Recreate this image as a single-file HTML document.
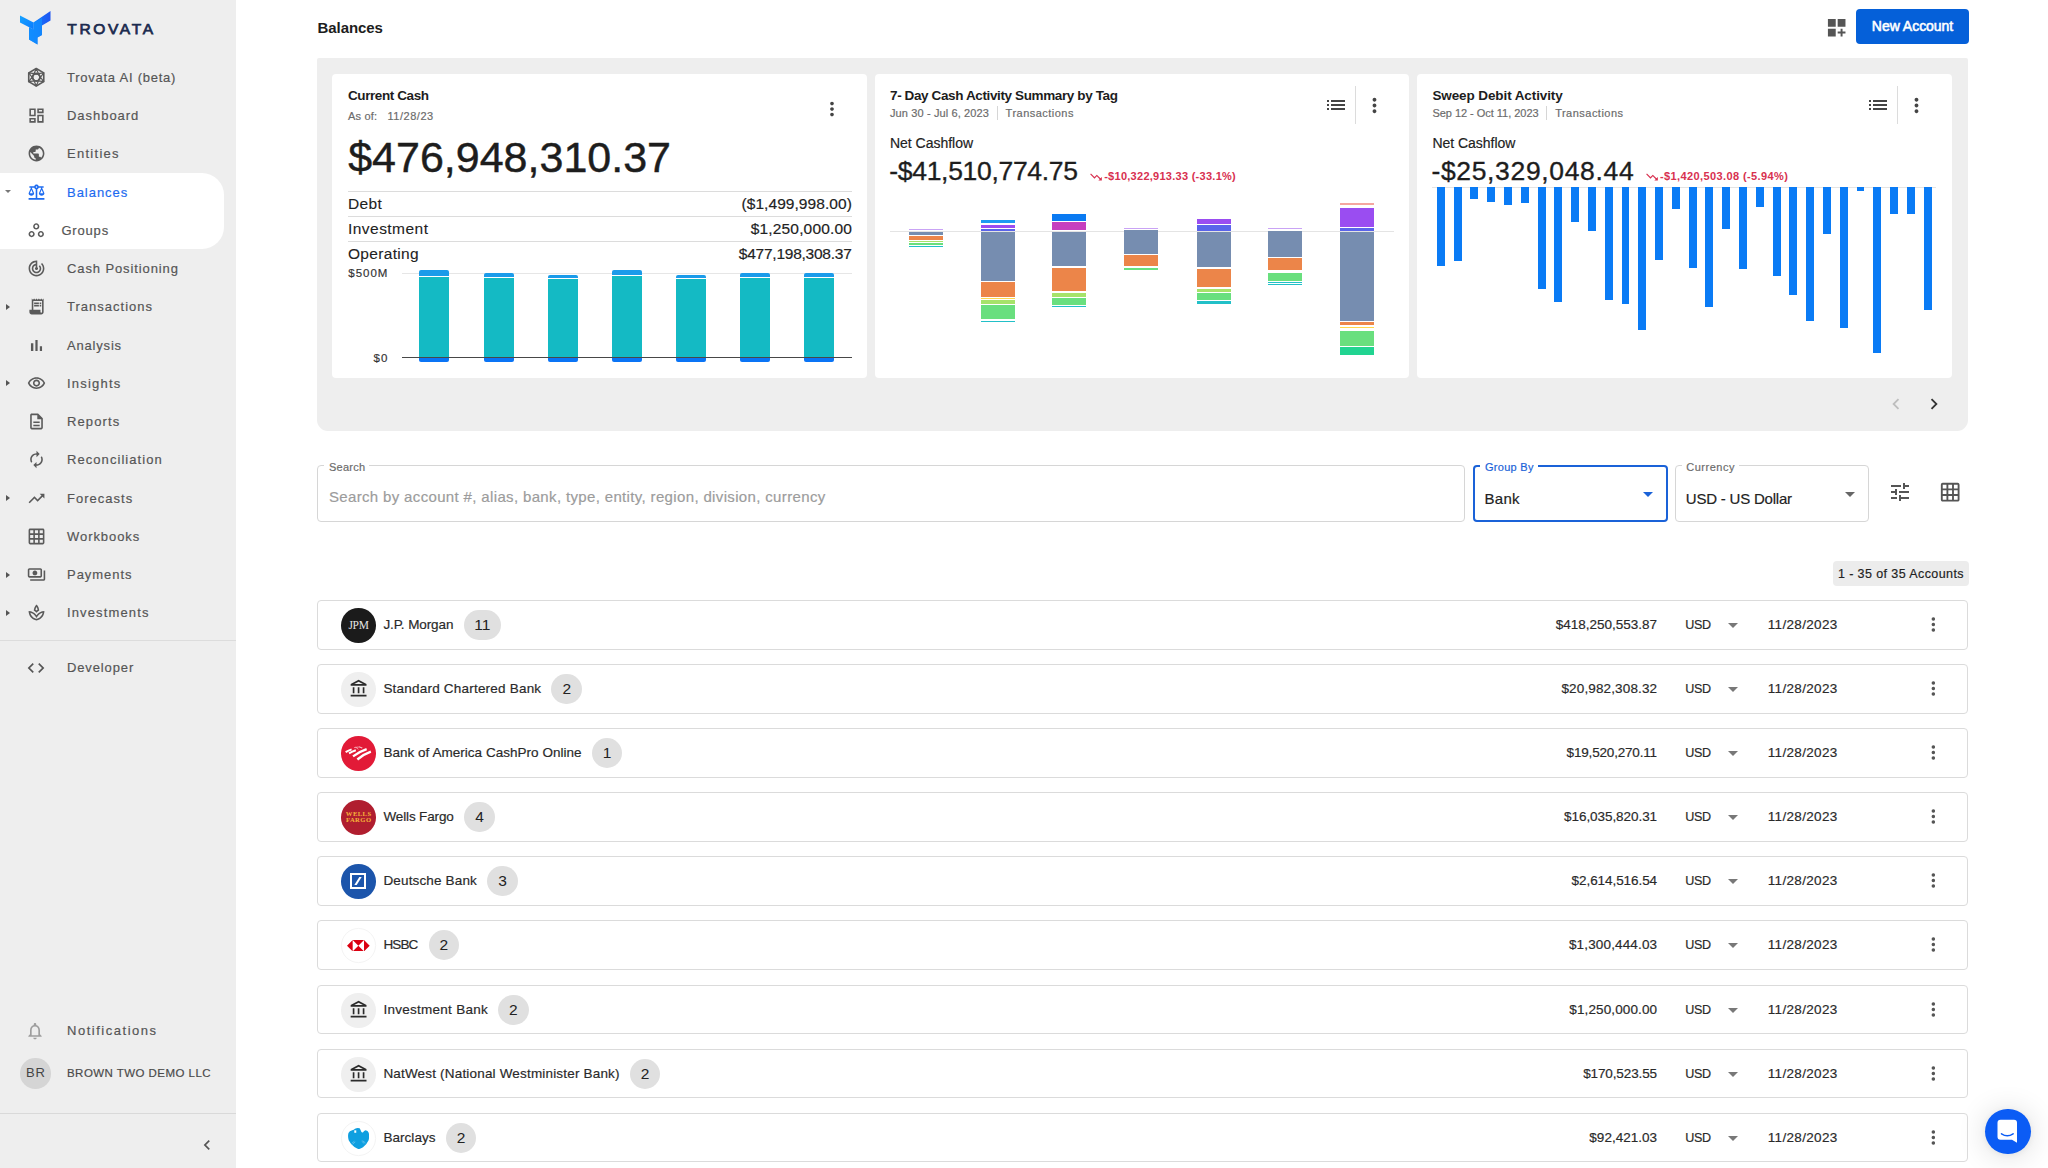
<!DOCTYPE html>
<html lang="en">
<head>
<meta charset="utf-8">
<title>Balances</title>
<style>
*{box-sizing:border-box;margin:0;padding:0}
html,body{width:2048px;height:1168px;overflow:hidden;background:#fff}
body{font-family:"Liberation Sans",sans-serif;color:#212121;position:relative}
.abs{position:absolute}
/* sidebar */
#sb{position:absolute;left:0;top:0;width:236px;height:1168px;background:#eeeeee}
#sb .act{position:absolute;left:0;top:173px;width:224px;height:76px;background:#fff;border-radius:0 22px 22px 0}
.mi{-webkit-text-stroke:.18px currentColor;position:absolute;left:67px;font-size:13px;letter-spacing:.9px;color:#555;line-height:20px;white-space:nowrap}
.mi.on{color:#1d6bf0}
.ic{position:absolute;left:26px;width:20px;height:20px}
.car{position:absolute;left:6px;width:0;height:0;border-top:3px solid transparent;border-bottom:3px solid transparent;border-left:4px solid #555}
.hr{position:absolute;left:0;width:236px;height:1px;background:#dcdcdc}
/* main */
#title{position:absolute;left:317.6px;top:18.1px;font-size:15px;letter-spacing:-.1px;font-weight:bold;line-height:20px;color:#1d1d1d}
#newacc{position:absolute;left:1855.9px;top:9.4px;width:112.8px;height:34.5px;background:#0560d9;border-radius:4px;color:#fff;font-size:14px;letter-spacing:-.03px;-webkit-text-stroke:.55px #fff;line-height:35.6px;text-align:center;padding-left:.5px}
#panel{position:absolute;left:317.2px;top:58.3px;width:1651.2px;height:372.6px;background:#eeeeee;border-radius:2px 2px 11px 11px}
.card{position:absolute;top:74.3px;width:534.5px;height:304px;background:#fff;border-radius:4px}
/* rows */
.row{position:absolute;left:317px;width:1651px;height:50px;border:1px solid #d6d6d6;border-radius:4px;background:#fff}
.row .nm{position:absolute;left:65px;top:15px;font-size:14px;line-height:18px;white-space:nowrap;color:#222}
.row .bd{position:absolute;top:9px;height:30px;min-width:30px;border-radius:15px;background:#e0e0e0;font-size:15px;line-height:30px;text-align:center;color:#222;padding:0 9px}
.row .amt{position:absolute;right:310px;top:16px;font-size:14px;line-height:18px;white-space:nowrap;color:#222}
.row .cur{position:absolute;left:1366px;top:15px;font-size:14px;line-height:18px;color:#222}
.row .dd{position:absolute;left:1411px;top:22px;width:0;height:0;border-left:5px solid transparent;border-right:5px solid transparent;border-top:5px solid #666}
.row .dt{position:absolute;left:1450px;top:16px;font-size:14px;line-height:18px;color:#222}
.row .kb{position:absolute;left:1613px;top:16px;width:4px;height:18px}
.logo{position:absolute;left:23px;top:7px;width:34px;height:34px;border-radius:50%;overflow:hidden}
</style>
</head>
<body>
<div id="sb">
  <div class="act"></div>
  <svg class="abs" style="left:19px;top:10px" width="33" height="36" viewBox="0 0 33 36">
<defs><linearGradient id="lg1" x1="0" y1="0" x2="1" y2="1"><stop offset="0" stop-color="#16a3ff"/><stop offset="1" stop-color="#0a7bff"/></linearGradient>
<linearGradient id="lg2" x1="0" y1="0" x2="1" y2="0"><stop offset="0" stop-color="#0f86ff"/><stop offset="1" stop-color="#1f55f2"/></linearGradient></defs>
<path d="M1 5.500 L14.500 12.500 L14.500 19.500 L1 12.500z" fill="url(#lg1)"/>
<path d="M14.500 12.500 L31.500 1 L31.500 10.500 L23 15.500 L23 25 L18.500 27.500 L18.500 34.500 L10 29.500 L10 17.200 L14.500 19.500z" fill="url(#lg2)"/>
<path d="M14.500 12.500 L23 8 L23 25 L18.500 27.500 L18.500 34.500 L10 29.500 L10 17.200 L14.500 19.500z" fill="#1290ff" opacity=".75"/>
</svg>
<div class="abs" style="left:67.3px;top:18.3px;font-size:15.5px;font-weight:normal;-webkit-text-stroke:.75px #1c2b4f;letter-spacing:2.66px;line-height:22px;color:#1c2b4f;white-space:nowrap">TROVATA</div>
<div class="mi" style="left:67px;top:67.95px;letter-spacing:0.75px">Trovata AI (beta)</div>
<div class="ic" style="left:26.35px;top:67.10px;width:20.5px;height:20.5px"><svg viewBox="0 0 24 24" width="20.5" height="20.5" style="display:block"><g fill="none" stroke="#5a5a5a" stroke-width="1.9" stroke-linejoin="round"><path d="M12 1.8l8.8 5.1v10.2L12 22.200l-8.800-5.100V6.900z"/><circle cx="12" cy="12" r="4.400" stroke-width="2.200"/><path d="M12 1.800l4.300 10.200L12 22.200 7.700 12zM3.200 6.900l11 1.400 6.600 8.800-11-1.400zM20.800 6.900l-6.600 8.800-11 1.400 6.600-8.800z" stroke-width="1.350"/></g></svg></div>
<div class="mi" style="left:67px;top:106.20px;letter-spacing:0.96px">Dashboard</div>
<div class="ic" style="left:26.80px;top:106.10px"><svg viewBox="0 0 24 24" width="19" height="19" style="display:block;"><path fill="#5a5a5a" d="M19 5v2h-4V5h4M9 5v6H5V5h4m10 8v6h-4v-6h4M9 17v2H5v-2h4M21 3h-8v6h8V3zM11 3H3v10h8V3zm10 8h-8v10h8V11zm-10 4H3v6h8v-6z"/></svg></div>
<div class="mi" style="left:67px;top:144.45px;letter-spacing:1.28px">Entities</div>
<div class="ic" style="left:26.80px;top:144.35px"><svg viewBox="0 0 24 24" width="19" height="19" style="display:block;"><path fill="#5a5a5a" d="M12 2C6.48 2 2 6.48 2 12s4.48 10 10 10 10-4.48 10-10S17.52 2 12 2zm-1 17.93c-3.95-.49-7-3.85-7-7.93 0-.62.08-1.21.21-1.79L9 15v1c0 1.1.9 2 2 2v1.93zm6.9-2.54c-.26-.81-1-1.39-1.9-1.39h-1v-3c0-.55-.45-1-1-1H8v-2h2c.55 0 1-.45 1-1V7h2c1.1 0 2-.9 2-2v-.41c2.93 1.19 5 4.06 5 7.41 0 2.08-.8 3.97-2.1 5.39z"/></svg></div>
<div class="mi on" style="left:67px;top:182.70px;letter-spacing:0.97px">Balances</div>
<div class="ic" style="left:26.80px;top:182.60px"><svg viewBox="0 0 24 24" width="19" height="19" style="display:block;"><path fill="#1d6bf0" d="M13 7.83c.85-.3 1.53-.98 1.83-1.83H18l-3 7c0 1.66 1.57 3 3.5 3s3.5-1.34 3.5-3l-3-7h2V4h-6.17c-.41-1.17-1.52-2-2.83-2s-2.42.83-2.83 2H3v2h2l-3 7c0 1.66 1.57 3 3.5 3S9 14.66 9 13L6 6h3.17c.3.85.98 1.53 1.83 1.83V19H2v2h20v-2h-9V7.83zM20.37 13h-3.74l1.87-4.36L20.37 13zm-13 0H3.63L5.5 8.64 7.37 13zM12 6c-.55 0-1-.45-1-1s.45-1 1-1 1 .45 1 1-.45 1-1 1z"/></svg></div>
<div class="abs" style="left:5px;top:190.10px;width:0;height:0;border-left:3px solid transparent;border-right:3px solid transparent;border-top:3.500px solid #777"></div>
<div class="mi" style="left:61.4px;top:220.95px;letter-spacing:0.83px">Groups</div>
<div class="ic" style="left:27.05px;top:221.10px"><svg viewBox="0 0 24 24" width="18.5" height="18.5" style="display:block;"><path fill="#5a5a5a" d="M6 15c1.1 0 2 .9 2 2s-.9 2-2 2-2-.9-2-2 .9-2 2-2m0-2c-2.2 0-4 1.8-4 4s1.8 4 4 4 4-1.8 4-4-1.8-4-4-4zm6-8c1.1 0 2 .9 2 2s-.9 2-2 2-2-.9-2-2 .9-2 2-2m0-2C9.8 3 8 4.8 8 7s1.8 4 4 4 4-1.8 4-4-1.8-4-4-4zm6 12c1.1 0 2 .9 2 2s-.9 2-2 2-2-.9-2-2 .9-2 2-2m0-2c-2.2 0-4 1.8-4 4s1.8 4 4 4 4-1.8 4-4-1.8-4-4-4z"/></svg></div>
<div class="mi" style="left:67px;top:259.20px;letter-spacing:0.89px">Cash Positioning</div>
<div class="ic" style="left:26.80px;top:259.10px"><svg viewBox="0 0 24 24" width="19" height="19" style="display:block;"><path fill="#5a5a5a" d="M19.07 4.93l-1.41 1.41C19.1 7.79 20 9.79 20 12c0 4.42-3.58 8-8 8s-8-3.58-8-8c0-4.08 3.05-7.44 7-7.93v2.02C8.16 6.57 6 9.03 6 12c0 3.31 2.69 6 6 6s6-2.69 6-6c0-1.66-.67-3.16-1.76-4.24l-1.41 1.41C15.55 9.9 16 10.9 16 12c0 2.21-1.79 4-4 4s-4-1.79-4-4c0-1.86 1.28-3.41 3-3.86v2.14c-.6.35-1 .98-1 1.72 0 1.1.9 2 2 2s2-.9 2-2c0-.74-.4-1.38-1-1.72V2h-1C6.48 2 2 6.48 2 12s4.48 10 10 10 10-4.48 10-10c0-2.76-1.12-5.26-2.93-7.07z"/></svg></div>
<div class="mi" style="left:67px;top:297.45px;letter-spacing:1.01px">Transactions</div>
<div class="ic" style="left:26.80px;top:297.35px"><svg viewBox="0 0 24 24" width="19" height="19" style="display:block;"><path fill="#5a5a5a" d="M19.5 3.5 18 2l-1.5 1.5L15 2l-1.5 1.5L12 2l-1.5 1.5L9 2 7.5 3.5 6 2v14H3v3c0 1.66 1.34 3 3 3h12c1.66 0 3-1.34 3-3V2l-1.5 1.5zM19 19c0 .55-.45 1-1 1s-1-.45-1-1v-3H8V5h11v14zM9 7h6v2H9zm7 0h2v2h-2zm-7 3h6v2H9zm7 0h2v2h-2z"/></svg></div>
<div class="car" style="top:303.85px"></div>
<div class="mi" style="left:67px;top:335.70px;letter-spacing:0.81px">Analysis</div>
<div class="ic" style="left:26.80px;top:335.60px"><svg viewBox="0 0 24 24" width="19" height="19" style="display:block;"><path fill="#5a5a5a" d="M5 9.2h3V19H5V9.2zM10.6 5h2.8v14h-2.8V5zm5.6 8H19v6h-2.8v-6z"/></svg></div>
<div class="mi" style="left:67px;top:373.95px;letter-spacing:1.2px">Insights</div>
<div class="ic" style="left:26.80px;top:373.85px"><svg viewBox="0 0 24 24" width="19" height="19" style="display:block;"><path fill="#5a5a5a" d="M12 6c3.79 0 7.17 2.13 8.82 5.5C19.17 14.87 15.79 17 12 17s-7.17-2.13-8.82-5.5C4.83 8.13 8.21 6 12 6m0-2C7 4 2.73 7.11 1 11.5 2.73 15.89 7 19 12 19s9.27-3.11 11-7.5C21.27 7.11 17 4 12 4zm0 5c1.38 0 2.5 1.12 2.5 2.5S13.38 14 12 14s-2.5-1.12-2.5-2.5S10.620 9 12 9m0-2c-2.48 0-4.5 2.02-4.5 4.5S9.52 16 12 16s4.5-2.02 4.5-4.5S14.48 7 12 7z"/></svg></div>
<div class="car" style="top:380.35px"></div>
<div class="mi" style="left:67px;top:412.20px;letter-spacing:1.11px">Reports</div>
<div class="ic" style="left:26.80px;top:412.10px"><svg viewBox="0 0 24 24" width="19" height="19" style="display:block;"><path fill="#5a5a5a" d="M8 16h8v2H8zm0-4h8v2H8zm6-10H6c-1.1 0-2 .9-2 2v16c0 1.1.89 2 1.99 2H18c1.1 0 2-.9 2-2V8l-6-6zm4 18H6V4h7v5h5v11z"/></svg></div>
<div class="mi" style="left:67px;top:450.45px;letter-spacing:1.06px">Reconciliation</div>
<div class="ic" style="left:26.80px;top:450.35px"><svg viewBox="0 0 24 24" width="19" height="19" style="display:block;"><path fill="#5a5a5a" d="M12 6v3l4-4-4-4v3c-4.42 0-8 3.58-8 8 0 1.57.46 3.03 1.24 4.26L6.7 14.8c-.45-.83-.7-1.79-.7-2.8 0-3.31 2.69-6 6-6zm6.76 1.74L17.3 9.2c.44.84.7 1.79.7 2.8 0 3.31-2.69 6-6 6v-3l-4 4 4 4v-3c4.42 0 8-3.58 8-8 0-1.57-.46-3.03-1.24-4.26z"/></svg></div>
<div class="mi" style="left:67px;top:488.70px;letter-spacing:1.02px">Forecasts</div>
<div class="ic" style="left:26.80px;top:488.60px"><svg viewBox="0 0 24 24" width="19" height="19" style="display:block;"><path fill="#5a5a5a" d="M16 6l2.29 2.29-4.88 4.88-4-4L2 16.59 3.41 18l6-6 4 4 6.3-6.29L22 12V6z"/></svg></div>
<div class="car" style="top:495.10px"></div>
<div class="mi" style="left:67px;top:526.95px;letter-spacing:0.93px">Workbooks</div>
<div class="ic" style="left:26.80px;top:526.85px"><svg viewBox="0 0 24 24" width="19" height="19" style="display:block;"><path fill="#5a5a5a" d="M20 2H4c-1.1 0-2 .9-2 2v16c0 1.1.9 2 2 2h16c1.1 0 2-.9 2-2V4c0-1.1-.9-2-2-2zM8 20H4v-4h4v4zm0-6H4v-4h4v4zm0-6H4V4h4v4zm6 12h-4v-4h4v4zm0-6h-4v-4h4v4zm0-6h-4V4h4v4zm6 12h-4v-4h4v4zm0-6h-4v-4h4v4zm0-6h-4V4h4v4z"/></svg></div>
<div class="mi" style="left:67px;top:565.20px;letter-spacing:0.97px">Payments</div>
<div class="ic" style="left:26.80px;top:565.10px"><svg viewBox="0 0 24 24" width="19" height="19" style="display:block;"><path fill="#5a5a5a" d="M19 14V6c0-1.1-.9-2-2-2H3c-1.1 0-2 .9-2 2v8c0 1.1.9 2 2 2h14c1.1 0 2-.9 2-2zm-2 0H3V6h14v8zm-7-7c-1.66 0-3 1.34-3 3s1.34 3 3 3 3-1.34 3-3-1.34-3-3-3zm13 0v11c0 1.1-.9 2-2 2H4v-2h17V7h2z"/></svg></div>
<div class="car" style="top:571.60px"></div>
<div class="mi" style="left:67px;top:603.45px;letter-spacing:1.13px">Investments</div>
<div class="ic" style="left:26.80px;top:603.35px"><svg viewBox="0 0 24 24" width="19" height="19" style="display:block;"><path fill="#5a5a5a" d="M15.49 9.63c-.18-2.79-1.31-5.51-3.43-7.63-2.14 2.14-3.32 4.86-3.55 7.63 1.28.68 2.46 1.56 3.49 2.63 1.03-1.06 2.21-1.94 3.49-2.63zm-3.44-4.44c.63 1.03 1.07 2.18 1.3 3.38-.47.3-.91.63-1.34.98-.42-.34-.87-.67-1.33-.97.25-1.2.71-2.35 1.37-3.39zM12 15.45C9.850 12.170 6.180 10 2 10c0 5.320 3.360 9.820 8.030 11.490.630.230 1.290.400 1.970.510.680-.120 1.330-.290 1.970-.510C18.640 19.820 22 15.320 22 10c-4.180 0-7.850 2.170-10 5.450zm1.320 4.150c-.440.150-.880.270-1.330.370-.440-.090-.870-.210-1.280-.360-3.290-1.180-5.700-3.990-6.450-7.350 1.100.260 2.150.710 3.120 1.330 1.100.75 2.030 1.700 2.950 2.980L12 19.100l1.670-2.550c.690-1.050 1.550-1.950 2.530-2.660 1.050-.720 2.260-1.330 3.540-1.640-.750 3.370-3.150 6.180-6.420 7.350z"/></svg></div>
<div class="car" style="top:609.85px"></div>
<div class="hr" style="top:640px"></div>
<div class="mi" style="top:657.9px;letter-spacing:.87px">Developer</div>
<div class="ic" style="left:26.3px;top:657.5px"><svg viewBox="0 0 24 24" width="20" height="20" style="display:block;"><path fill="#555" d="M9.4 16.6L4.8 12l4.6-4.6L8 6l-6 6 6 6 1.4-1.4zm5.2 0l4.6-4.6-4.6-4.6L16 6l6 6-6 6-1.4-1.4z"/></svg></div>
<div class="mi" style="top:1020.9px;letter-spacing:1.52px">Notifications</div>
<div class="ic" style="left:25.4px;top:1021.3px"><svg viewBox="0 0 24 24" width="20" height="20" style="display:block;"><path fill="#9e9e9e" d="M12 22c1.1 0 2-.9 2-2h-4c0 1.1.9 2 2 2zm6-6v-5c0-3.07-1.63-5.64-4.5-6.32V4c0-.83-.67-1.5-1.5-1.5s-1.5.67-1.5 1.5v.68C7.64 5.36 6 7.92 6 11v5l-2 2v1h16v-1l-2-2zm-2 1H8v-6c0-2.48 1.51-4.5 4-4.5s4 2.02 4 4.5v6z"/></svg></div>
<div class="abs" style="left:20px;top:1058px;width:30.500px;height:30.500px;border-radius:50%;background:#d5d5d5;font-size:13px;letter-spacing:.8px;line-height:30.500px;text-align:center;color:#444;padding-left:1px">BR</div>
<div class="mi" style="top:1063px;font-size:11.5px;letter-spacing:.45px;color:#4a4a4a">BROWN TWO DEMO LLC</div>
<div class="hr" style="top:1112.500px;background:#d9d9d9"></div>
<div class="abs" style="left:197px;top:1135px"><svg viewBox="0 0 24 24" width="20" height="20" style="display:block;"><path fill="#555" d="M15.41 7.41L14 6l-6 6 6 6 1.41-1.41L10.83 12z"/></svg></div>
</div>
<div id="title">Balances</div>
<div id="newacc">New Account</div>
<div id="panel"></div>
<div class="card" style="left:332.4px" id="c1"></div>
<div class="card" style="left:874.6px" id="c2"></div>
<div class="card" style="left:1417.3px" id="c3"></div>
<div class="abs" style="left:1824.7px;top:16.1px"><svg viewBox="0 0 24 24" width="23.4" height="23.4" style="display:block;"><path fill="#555" d="M3 3h8v8H3zm10 0h8v8h-8zM3 13h8v8H3zm15 0h-2v3h-3v2h3v3h2v-3h3v-2h-3z"/></svg></div>
<div class="abs" style="left:348px;top:86.10px;font-size:13.5px;line-height:19px;letter-spacing:-0.41px;font-weight:bold;color:#1d1d1d;white-space:nowrap;">Current Cash</div>
<div class="abs" style="left:348px;top:108.80px;font-size:11px;line-height:15px;letter-spacing:0.21px;font-weight:normal;color:#6b6b6b;white-space:nowrap;-webkit-text-stroke:0.18px #6b6b6b;">As of:</div>
<div class="abs" style="left:387.4px;top:108.80px;font-size:11px;line-height:15px;letter-spacing:0.55px;font-weight:normal;color:#6b6b6b;white-space:nowrap;-webkit-text-stroke:0.18px #6b6b6b;">11/28/23</div>
<div class="abs" style="left:821.2px;top:97.9px"><svg viewBox="0 0 24 24" width="22" height="22" style="display:block;"><path fill="#444" d="M12 8c1.1 0 2-.9 2-2s-.9-2-2-2-2 .9-2 2 .9 2 2 2zm0 2c-1.1 0-2 .9-2 2s.9 2 2 2 2-.9 2-2-.9-2-2-2zm0 6c-1.1 0-2 .9-2 2s.9 2 2 2 2-.9 2-2-.9-2-2-2z"/></svg></div>
<div class="abs" style="left:348.2px;top:132.20px;font-size:43px;line-height:50px;letter-spacing:0px;font-weight:normal;color:#1d1d1d;white-space:nowrap;-webkit-text-stroke:.45px #1d1d1d;">$476,948,310.37</div>
<div class="abs" style="left:347.5px;top:190.8px;width:504.3px;height:1px;background:#dcdcdc"></div>
<div class="abs" style="left:347.5px;top:216.1px;width:504.3px;height:1px;background:#dcdcdc"></div>
<div class="abs" style="left:347.5px;top:240.9px;width:504.3px;height:1px;background:#dcdcdc"></div>
<div class="abs" style="left:348px;top:193.00px;font-size:15.5px;line-height:22px;letter-spacing:0.32px;font-weight:normal;color:#222;white-space:nowrap;-webkit-text-stroke:.1px #222;">Debt</div>
<div class="abs" style="-webkit-text-stroke:0.18px #222;right:1196.14px;top:193.00px;font-size:15.5px;line-height:22px;letter-spacing:0.06px;font-weight:normal;color:#222;white-space:nowrap">($1,499,998.00)</div>
<div class="abs" style="left:348px;top:217.80px;font-size:15.5px;line-height:22px;letter-spacing:0.46px;font-weight:normal;color:#222;white-space:nowrap;-webkit-text-stroke:.1px #222;">Investment</div>
<div class="abs" style="-webkit-text-stroke:0.18px #222;right:1196.04px;top:217.80px;font-size:15.5px;line-height:22px;letter-spacing:0.16px;font-weight:normal;color:#222;white-space:nowrap">$1,250,000.00</div>
<div class="abs" style="left:348px;top:242.70px;font-size:15.5px;line-height:22px;letter-spacing:0.31px;font-weight:normal;color:#222;white-space:nowrap;-webkit-text-stroke:.1px #222;">Operating</div>
<div class="abs" style="-webkit-text-stroke:0.18px #222;right:1196.44px;top:242.70px;font-size:15.5px;line-height:22px;letter-spacing:-0.24px;font-weight:normal;color:#222;white-space:nowrap">$477,198,308.37</div>
<div class="abs" style="-webkit-text-stroke:0.18px #333;right:1659.60px;top:264.70px;font-size:11.5px;line-height:16px;letter-spacing:1.0px;font-weight:normal;color:#333;white-space:nowrap">$500M</div>
<div class="abs" style="-webkit-text-stroke:0.18px #333;right:1659.40px;top:349.80px;font-size:11.5px;line-height:16px;letter-spacing:1.2px;font-weight:normal;color:#333;white-space:nowrap">$0</div>
<div class="abs" style="left:402.40px;top:273.30px;width:449.40px;height:1.00px;background:#e6e6e6"></div>
<div class="abs" style="left:419px;top:270.40px;width:30.3px;height:5.20px;background:#1b9bea;border-radius:2px 2px 0 0"></div>
<div class="abs" style="left:419.00px;top:276.50px;width:30.30px;height:80.90px;background:#14bac4"></div>
<div class="abs" style="left:419px;top:357.4px;width:30.3px;height:4.6px;background:#0a74f5;border-radius:0 0 2px 2px"></div>
<div class="abs" style="left:484px;top:273.40px;width:30.3px;height:3.70px;background:#1b9bea;border-radius:2px 2px 0 0"></div>
<div class="abs" style="left:484.00px;top:278.00px;width:30.30px;height:79.40px;background:#14bac4"></div>
<div class="abs" style="left:484px;top:357.4px;width:30.3px;height:4.6px;background:#0a74f5;border-radius:0 0 2px 2px"></div>
<div class="abs" style="left:548px;top:274.60px;width:30.3px;height:3.20px;background:#1b9bea;border-radius:2px 2px 0 0"></div>
<div class="abs" style="left:548.00px;top:278.70px;width:30.30px;height:78.70px;background:#14bac4"></div>
<div class="abs" style="left:548px;top:357.4px;width:30.3px;height:4.6px;background:#0a74f5;border-radius:0 0 2px 2px"></div>
<div class="abs" style="left:612px;top:270.40px;width:30.3px;height:4.70px;background:#1b9bea;border-radius:2px 2px 0 0"></div>
<div class="abs" style="left:612.00px;top:276.00px;width:30.30px;height:81.40px;background:#14bac4"></div>
<div class="abs" style="left:612px;top:357.4px;width:30.3px;height:4.6px;background:#0a74f5;border-radius:0 0 2px 2px"></div>
<div class="abs" style="left:676px;top:274.60px;width:30.3px;height:3.50px;background:#1b9bea;border-radius:2px 2px 0 0"></div>
<div class="abs" style="left:676.00px;top:279.00px;width:30.30px;height:78.40px;background:#14bac4"></div>
<div class="abs" style="left:676px;top:357.4px;width:30.3px;height:4.6px;background:#0a74f5;border-radius:0 0 2px 2px"></div>
<div class="abs" style="left:740px;top:273.40px;width:30.3px;height:3.70px;background:#1b9bea;border-radius:2px 2px 0 0"></div>
<div class="abs" style="left:740.00px;top:278.00px;width:30.30px;height:79.40px;background:#14bac4"></div>
<div class="abs" style="left:740px;top:357.4px;width:30.3px;height:4.6px;background:#0a74f5;border-radius:0 0 2px 2px"></div>
<div class="abs" style="left:804px;top:273.40px;width:30.3px;height:3.70px;background:#1b9bea;border-radius:2px 2px 0 0"></div>
<div class="abs" style="left:804.00px;top:278.00px;width:30.30px;height:79.40px;background:#14bac4"></div>
<div class="abs" style="left:804px;top:357.4px;width:30.3px;height:4.6px;background:#0a74f5;border-radius:0 0 2px 2px"></div>
<div class="abs" style="left:402.40px;top:356.70px;width:449.40px;height:1.40px;background:#484848"></div>
<div class="abs" style="left:890px;top:86.40px;font-size:13.5px;line-height:19px;letter-spacing:-0.38px;font-weight:bold;color:#1d1d1d;white-space:nowrap;">7- Day Cash Activity Summary by Tag</div>
<div class="abs" style="left:890px;top:105.80px;font-size:11px;line-height:15px;letter-spacing:0.12px;font-weight:normal;color:#6b6b6b;white-space:nowrap;-webkit-text-stroke:0.18px #6b6b6b;">Jun 30 - Jul 6, 2023</div>
<div class="abs" style="left:996.60px;top:105.60px;width:1.00px;height:14.40px;background:#d6d6d6"></div>
<div class="abs" style="left:1005.6px;top:105.80px;font-size:11px;line-height:15px;letter-spacing:0.48px;font-weight:normal;color:#6b6b6b;white-space:nowrap;-webkit-text-stroke:0.18px #6b6b6b;">Transactions</div>
<div class="abs" style="left:1323.7px;top:93px"><svg viewBox="0 0 24 24" width="24" height="24" style="display:block;"><path fill="#444" d="M3 13h2v-2H3v2zm0 4h2v-2H3v2zm0-8h2V7H3v2zm4 4h14v-2H7v2zm0 4h14v-2H7v2zM7 7v2h14V7H7z"/></svg></div>
<div class="abs" style="left:1355.00px;top:86.00px;width:1.00px;height:38.00px;background:#dcdcdc"></div>
<div class="abs" style="left:1363.2px;top:93.7px"><svg viewBox="0 0 24 24" width="23" height="23" style="display:block;"><path fill="#444" d="M12 8c1.1 0 2-.9 2-2s-.9-2-2-2-2 .9-2 2 .9 2 2 2zm0 2c-1.1 0-2 .9-2 2s.9 2 2 2 2-.9 2-2-.9-2-2-2zm0 6c-1.1 0-2 .9-2 2s.9 2 2 2 2-.9 2-2-.9-2-2-2z"/></svg></div>
<div class="abs" style="left:890px;top:133.20px;font-size:14px;line-height:20px;letter-spacing:-0.02px;font-weight:normal;color:#222;white-space:nowrap;-webkit-text-stroke:0.18px #222;">Net Cashflow</div>
<div class="abs" style="left:889.3px;top:154.60px;font-size:26.5px;line-height:32px;letter-spacing:-0.31px;font-weight:normal;color:#1d1d1d;white-space:nowrap;-webkit-text-stroke:.35px #1d1d1d;">-$41,510,774.75</div>
<svg class="abs" style="left:1089px;top:169.6px" width="14" height="14" viewBox="0 0 24 24"><path fill="#d8304f" d="M16 18l2.290-2.290-4.880-4.880-4 4L2 7.410 3.410 6l6 6 4-4 6.300 6.290L22 12v6z"/></svg><div class="abs" style="left:1104.2px;top:169.00px;font-size:11px;line-height:15px;letter-spacing:0.27px;font-weight:bold;color:#d8304f;white-space:nowrap;">-$10,322,913.33 (-33.1%)</div>
<div class="abs" style="left:890.00px;top:231.30px;width:503.60px;height:1.00px;background:#e4e4e4"></div>
<div class="abs" style="left:908.90px;top:228.85px;width:34.40px;height:1.46px;background:#c9a3f5"></div>
<div class="abs" style="left:908.90px;top:232.34px;width:34.40px;height:2.33px;background:#768db0"></div>
<div class="abs" style="left:908.90px;top:235.84px;width:34.40px;height:3.78px;background:#ec8549"></div>
<div class="abs" style="left:908.90px;top:240.79px;width:34.40px;height:1.46px;background:#a6e36a"></div>
<div class="abs" style="left:908.90px;top:242.82px;width:34.40px;height:2.04px;background:#69df7e"></div>
<div class="abs" style="left:908.90px;top:245.74px;width:34.40px;height:0.87px;background:#22c0c8"></div>
<div class="abs" style="left:980.50px;top:220.12px;width:34.40px;height:2.62px;background:#1e9af2"></div>
<div class="abs" style="left:980.50px;top:224.77px;width:34.40px;height:3.49px;background:#9a4df1"></div>
<div class="abs" style="left:980.50px;top:228.85px;width:34.40px;height:1.75px;background:#5a64ea"></div>
<div class="abs" style="left:980.50px;top:231.76px;width:34.40px;height:49.49px;background:#768db0"></div>
<div class="abs" style="left:980.50px;top:282.13px;width:34.40px;height:15.14px;background:#ec8549"></div>
<div class="abs" style="left:980.50px;top:297.85px;width:34.40px;height:1.46px;background:#ffd84d"></div>
<div class="abs" style="left:980.50px;top:300.17px;width:34.40px;height:3.78px;background:#a6e36a"></div>
<div class="abs" style="left:980.50px;top:305.12px;width:34.40px;height:14.26px;background:#69df7e"></div>
<div class="abs" style="left:980.50px;top:320.84px;width:34.40px;height:0.87px;background:#22c0c8"></div>
<div class="abs" style="left:1052.10px;top:214.00px;width:34.40px;height:6.70px;background:#0a7af2"></div>
<div class="abs" style="left:1052.10px;top:222.45px;width:34.40px;height:7.57px;background:#c63fbf"></div>
<div class="abs" style="left:1052.10px;top:232.34px;width:34.40px;height:33.77px;background:#768db0"></div>
<div class="abs" style="left:1052.10px;top:267.57px;width:34.40px;height:23.87px;background:#ec8549"></div>
<div class="abs" style="left:1052.10px;top:292.61px;width:34.40px;height:4.08px;background:#a6e36a"></div>
<div class="abs" style="left:1052.10px;top:298.14px;width:34.40px;height:6.40px;background:#69df7e"></div>
<div class="abs" style="left:1052.10px;top:306.00px;width:34.40px;height:0.87px;background:#22c0c8"></div>
<div class="abs" style="left:1124.00px;top:227.98px;width:34.40px;height:1.46px;background:#c9a3f5"></div>
<div class="abs" style="left:1124.00px;top:230.31px;width:34.40px;height:23.58px;background:#768db0"></div>
<div class="abs" style="left:1124.00px;top:255.34px;width:34.40px;height:10.19px;background:#ec8549"></div>
<div class="abs" style="left:1124.00px;top:267.57px;width:34.40px;height:2.62px;background:#69df7e"></div>
<div class="abs" style="left:1196.50px;top:218.95px;width:34.40px;height:4.66px;background:#9a4df1"></div>
<div class="abs" style="left:1196.50px;top:224.77px;width:34.40px;height:5.82px;background:#5a64ea"></div>
<div class="abs" style="left:1196.50px;top:232.34px;width:34.40px;height:34.93px;background:#768db0"></div>
<div class="abs" style="left:1196.50px;top:268.73px;width:34.40px;height:18.63px;background:#ec8549"></div>
<div class="abs" style="left:1196.50px;top:288.82px;width:34.40px;height:2.91px;background:#a6e36a"></div>
<div class="abs" style="left:1196.50px;top:292.90px;width:34.40px;height:6.99px;background:#69df7e"></div>
<div class="abs" style="left:1196.50px;top:301.05px;width:34.40px;height:2.62px;background:#22c0c8"></div>
<div class="abs" style="left:1268.10px;top:227.98px;width:34.40px;height:1.46px;background:#c9a3f5"></div>
<div class="abs" style="left:1268.10px;top:230.60px;width:34.40px;height:26.20px;background:#768db0"></div>
<div class="abs" style="left:1268.10px;top:257.96px;width:34.40px;height:12.23px;background:#ec8549"></div>
<div class="abs" style="left:1268.10px;top:273.39px;width:34.40px;height:7.28px;background:#69df7e"></div>
<div class="abs" style="left:1268.10px;top:282.13px;width:34.40px;height:0.87px;background:#22c0c8"></div>
<div class="abs" style="left:1268.10px;top:283.87px;width:34.40px;height:0.87px;background:#22c0c8"></div>
<div class="abs" style="left:1340.00px;top:203.23px;width:34.40px;height:1.46px;background:#f5a6a0"></div>
<div class="abs" style="left:1340.00px;top:207.60px;width:34.40px;height:19.51px;background:#9a4df1"></div>
<div class="abs" style="left:1340.00px;top:228.27px;width:34.40px;height:2.33px;background:#5a64ea"></div>
<div class="abs" style="left:1340.00px;top:232.34px;width:34.40px;height:88.50px;background:#768db0"></div>
<div class="abs" style="left:1340.00px;top:322.30px;width:34.40px;height:3.20px;background:#ec8549"></div>
<div class="abs" style="left:1340.00px;top:326.67px;width:34.40px;height:1.75px;background:#ffd84d"></div>
<div class="abs" style="left:1340.00px;top:331.03px;width:34.40px;height:14.56px;background:#69df7e"></div>
<div class="abs" style="left:1340.00px;top:347.05px;width:34.40px;height:7.57px;background:#21d491"></div>
<div class="abs" style="left:1432.4px;top:86.40px;font-size:13.5px;line-height:19px;letter-spacing:-0.1px;font-weight:bold;color:#1d1d1d;white-space:nowrap;">Sweep Debit Activity</div>
<div class="abs" style="left:1432.4px;top:105.80px;font-size:11px;line-height:15px;letter-spacing:-0.03px;font-weight:normal;color:#6b6b6b;white-space:nowrap;-webkit-text-stroke:0.18px #6b6b6b;">Sep 12 - Oct 11, 2023</div>
<div class="abs" style="left:1545.70px;top:105.60px;width:1.00px;height:14.40px;background:#d6d6d6"></div>
<div class="abs" style="left:1555.2px;top:105.80px;font-size:11px;line-height:15px;letter-spacing:0.48px;font-weight:normal;color:#6b6b6b;white-space:nowrap;-webkit-text-stroke:0.18px #6b6b6b;">Transactions</div>
<div class="abs" style="left:1865.8px;top:93px"><svg viewBox="0 0 24 24" width="24" height="24" style="display:block;"><path fill="#444" d="M3 13h2v-2H3v2zm0 4h2v-2H3v2zm0-8h2V7H3v2zm4 4h14v-2H7v2zm0 4h14v-2H7v2zM7 7v2h14V7H7z"/></svg></div>
<div class="abs" style="left:1897.00px;top:86.00px;width:1.00px;height:38.00px;background:#dcdcdc"></div>
<div class="abs" style="left:1905.3px;top:93.7px"><svg viewBox="0 0 24 24" width="23" height="23" style="display:block;"><path fill="#444" d="M12 8c1.1 0 2-.9 2-2s-.9-2-2-2-2 .9-2 2 .9 2 2 2zm0 2c-1.1 0-2 .9-2 2s.9 2 2 2 2-.9 2-2-.9-2-2-2zm0 6c-1.1 0-2 .9-2 2s.9 2 2 2 2-.9 2-2-.9-2-2-2z"/></svg></div>
<div class="abs" style="left:1432.4px;top:133.20px;font-size:14px;line-height:20px;letter-spacing:-0.02px;font-weight:normal;color:#222;white-space:nowrap;-webkit-text-stroke:0.18px #222;">Net Cashflow</div>
<div class="abs" style="left:1431.4px;top:154.50px;font-size:26.5px;line-height:32px;letter-spacing:0.66px;font-weight:normal;color:#1d1d1d;white-space:nowrap;-webkit-text-stroke:.35px #1d1d1d;">-$25,329,048.44</div>
<svg class="abs" style="left:1644.7px;top:169.6px" width="14" height="14" viewBox="0 0 24 24"><path fill="#d8304f" d="M16 18l2.290-2.290-4.880-4.880-4 4L2 7.410 3.410 6l6 6 4-4 6.300 6.290L22 12v6z"/></svg><div class="abs" style="left:1659.9px;top:169.00px;font-size:11px;line-height:15px;letter-spacing:0.4px;font-weight:bold;color:#d8304f;white-space:nowrap;">-$1,420,503.08 (-5.94%)</div>
<div class="abs" style="left:1432.40px;top:186.80px;width:503.40px;height:1.00px;background:#e4e4e4"></div>
<div class="abs" style="left:1436.90px;top:187.30px;width:7.90px;height:78.30px;background:#0a7bf5"></div>
<div class="abs" style="left:1453.69px;top:187.30px;width:7.90px;height:73.40px;background:#0a7bf5"></div>
<div class="abs" style="left:1470.47px;top:187.30px;width:7.90px;height:11.30px;background:#0a7bf5"></div>
<div class="abs" style="left:1487.26px;top:187.30px;width:7.90px;height:14.30px;background:#0a7bf5"></div>
<div class="abs" style="left:1504.04px;top:187.30px;width:7.90px;height:18.10px;background:#0a7bf5"></div>
<div class="abs" style="left:1520.83px;top:187.30px;width:7.90px;height:16.20px;background:#0a7bf5"></div>
<div class="abs" style="left:1537.62px;top:187.30px;width:7.90px;height:101.30px;background:#0a7bf5"></div>
<div class="abs" style="left:1554.40px;top:187.30px;width:7.90px;height:114.50px;background:#0a7bf5"></div>
<div class="abs" style="left:1571.19px;top:187.30px;width:7.90px;height:34.30px;background:#0a7bf5"></div>
<div class="abs" style="left:1587.97px;top:187.30px;width:7.90px;height:43.70px;background:#0a7bf5"></div>
<div class="abs" style="left:1604.76px;top:187.30px;width:7.90px;height:112.60px;background:#0a7bf5"></div>
<div class="abs" style="left:1621.55px;top:187.30px;width:7.90px;height:116.40px;background:#0a7bf5"></div>
<div class="abs" style="left:1638.33px;top:187.30px;width:7.90px;height:142.40px;background:#0a7bf5"></div>
<div class="abs" style="left:1655.12px;top:187.30px;width:7.90px;height:72.30px;background:#0a7bf5"></div>
<div class="abs" style="left:1671.90px;top:187.30px;width:7.90px;height:21.40px;background:#0a7bf5"></div>
<div class="abs" style="left:1688.69px;top:187.30px;width:7.90px;height:81.00px;background:#0a7bf5"></div>
<div class="abs" style="left:1705.48px;top:187.30px;width:7.90px;height:119.40px;background:#0a7bf5"></div>
<div class="abs" style="left:1722.26px;top:187.30px;width:7.90px;height:41.40px;background:#0a7bf5"></div>
<div class="abs" style="left:1739.05px;top:187.30px;width:7.90px;height:82.10px;background:#0a7bf5"></div>
<div class="abs" style="left:1755.83px;top:187.30px;width:7.90px;height:19.60px;background:#0a7bf5"></div>
<div class="abs" style="left:1772.62px;top:187.30px;width:7.90px;height:88.90px;background:#0a7bf5"></div>
<div class="abs" style="left:1789.41px;top:187.30px;width:7.90px;height:107.70px;background:#0a7bf5"></div>
<div class="abs" style="left:1806.19px;top:187.30px;width:7.90px;height:133.70px;background:#0a7bf5"></div>
<div class="abs" style="left:1822.98px;top:187.30px;width:7.90px;height:46.70px;background:#0a7bf5"></div>
<div class="abs" style="left:1839.76px;top:187.30px;width:7.90px;height:140.50px;background:#0a7bf5"></div>
<div class="abs" style="left:1856.55px;top:187.30px;width:7.90px;height:3.70px;background:#0a7bf5"></div>
<div class="abs" style="left:1873.34px;top:187.30px;width:7.90px;height:166.10px;background:#0a7bf5"></div>
<div class="abs" style="left:1890.12px;top:187.30px;width:7.90px;height:26.70px;background:#0a7bf5"></div>
<div class="abs" style="left:1906.91px;top:187.30px;width:7.90px;height:26.70px;background:#0a7bf5"></div>
<div class="abs" style="left:1923.69px;top:187.30px;width:7.90px;height:122.40px;background:#0a7bf5"></div>
<div class="abs" style="left:1884.9px;top:393.3px"><svg viewBox="0 0 24 24" width="22" height="22" style="display:block;"><path fill="#bdbdbd" d="M15.41 7.41L14 6l-6 6 6 6 1.41-1.41L10.83 12z"/></svg></div>
<div class="abs" style="left:1922.9px;top:393.3px"><svg viewBox="0 0 24 24" width="22" height="22" style="display:block;"><path fill="#333" d="M10 6L8.59 7.41 13.17 12l-4.58 4.59L10 18l6-6z"/></svg></div>
<div class="abs" style="left:317.2px;top:465.3px;width:1148px;height:56.4px;border:1px solid #d6d6d6;border-radius:4px"></div><div class="abs" style="left:324.2px;top:463.3px;width:45.3px;height:5px;background:#fff"></div><div class="abs" style="left:328.9px;top:459.80px;font-size:11px;line-height:15px;letter-spacing:0.29px;font-weight:normal;color:#6b6b6b;white-space:nowrap;-webkit-text-stroke:0.18px #6b6b6b;">Search</div>
<div class="abs" style="left:328.9px;top:486.20px;font-size:15px;line-height:22px;letter-spacing:0.35px;font-weight:normal;color:#9c9c9c;white-space:nowrap;-webkit-text-stroke:0.18px #9c9c9c;">Search by account #, alias, bank, type, entity, region, division, currency</div>
<div class="abs" style="left:1473.3px;top:465px;width:194.5px;height:56.8px;border:2px solid #1a62d8;border-radius:4px"></div><div class="abs" style="left:1480.3px;top:463px;width:57.4px;height:5px;background:#fff"></div><div class="abs" style="left:1485.0px;top:459.80px;font-size:11px;line-height:15px;letter-spacing:0.28px;font-weight:normal;color:#1a62d8;white-space:nowrap;-webkit-text-stroke:0.18px #1a62d8;">Group By</div>
<div class="abs" style="left:1484.5px;top:487.50px;font-size:15px;line-height:21px;letter-spacing:0.27px;font-weight:normal;color:#222;white-space:nowrap;-webkit-text-stroke:0.18px #222;">Bank</div>
<div class="abs" style="left:1642.7px;top:492.3px;width:0;height:0;border-left:5px solid transparent;border-right:5px solid transparent;border-top:5px solid #1a62d8"></div>
<div class="abs" style="left:1674.6px;top:465.3px;width:194.5px;height:56.4px;border:1px solid #d6d6d6;border-radius:4px"></div><div class="abs" style="left:1681.6px;top:463.3px;width:57.1px;height:5px;background:#fff"></div><div class="abs" style="left:1686.3px;top:459.80px;font-size:11px;line-height:15px;letter-spacing:0.5px;font-weight:normal;color:#6b6b6b;white-space:nowrap;-webkit-text-stroke:0.18px #6b6b6b;">Currency</div>
<div class="abs" style="left:1685.8px;top:487.50px;font-size:15px;line-height:21px;letter-spacing:-0.21px;font-weight:normal;color:#222;white-space:nowrap;-webkit-text-stroke:0.18px #222;">USD - US Dollar</div>
<div class="abs" style="left:1844.5px;top:492.3px;width:0;height:0;border-left:5px solid transparent;border-right:5px solid transparent;border-top:5px solid #666"></div>
<div class="abs" style="left:1887.9px;top:480.4px"><svg viewBox="0 0 24 24" width="24" height="24" style="display:block;"><path fill="#555" d="M3 17v2h6v-2H3zM3 5v2h10V5H3zm10 16v-2h8v-2h-8v-2h-2v6h2zM7 9v2H3v2h4v2h2V9H7zm14 4v-2H11v2h10zm-6-4h2V7h4V5h-4V3h-2v6z"/></svg></div>
<div class="abs" style="left:1938.5px;top:481.2px"><svg viewBox="0 0 24 24" width="22.4" height="22.4" style="display:block;"><path fill="#555" d="M20 2H4c-1.1 0-2 .9-2 2v16c0 1.1.9 2 2 2h16c1.1 0 2-.9 2-2V4c0-1.1-.9-2-2-2zM8 20H4v-4h4v4zm0-6H4v-4h4v4zm0-6H4V4h4v4zm6 12h-4v-4h4v4zm0-6h-4v-4h4v4zm0-6h-4V4h4v4zm6 12h-4v-4h4v4zm0-6h-4v-4h4v4zm0-6h-4V4h4v4z"/></svg></div>
<div class="abs" style="left:1833.1px;top:561.1px;width:135.9px;height:25px;background:#ececec;border-radius:4px"></div>
<div class="abs" style="left:1837.9px;top:564.70px;font-size:12.5px;line-height:18px;letter-spacing:0.41px;font-weight:normal;color:#222;white-space:nowrap;-webkit-text-stroke:0.18px #222;">1 - 35 of 35 Accounts</div>
<div class="abs" style="left:1985px;top:1108.6px;width:45.6px;height:45.6px;border-radius:50%;background:#0b5cf5;box-shadow:0 1px 6px rgba(0,0,0,.06),0 2px 30px rgba(0,0,0,.14)"></div>
<svg class="abs" style="left:1996px;top:1118px" width="23" height="26" viewBox="0 0 23 26"><path d="M4.500 1.800h13.500a3 3 0 0 1 3 3v20l-5-3H4.500a3 3 0 0 1-3-3v-14a3 3 0 0 1 3-3z" fill="#fff"/><path d="M5.500 15.800c3.600 2.500 8 2.500 11.600 0" fill="none" stroke="#0b5cf5" stroke-width="1.500" stroke-linecap="round"/></svg>
<div class="abs" style="left:317.2px;top:600.30px;width:1651.3px;height:50px;border:1px solid #dbdbdb;border-radius:4px"></div>
<div class="abs" style="left:341.20px;top:608.00px;width:34.6px;height:34.6px;border-radius:50%;background:#1b1b1b;color:#e4e4e4;font-family:'Liberation Serif',serif;font-size:11.5px;line-height:34.6px;text-align:center;letter-spacing:-.3px">JPM</div>
<div class="abs" style="left:383.4px;top:615.10px;font-size:13.5px;line-height:20px;letter-spacing:-0.1px;font-weight:normal;color:#2a2a2a;white-space:nowrap;-webkit-text-stroke:0.18px #2a2a2a;">J.P. Morgan</div>
<div class="abs" style="left:463.60px;top:610.10px;width:37.5px;height:30.4px;border-radius:15.2px;background:#e0e0e0;font-size:15.500px;line-height:30.400px;text-align:center;color:#222">11</div>
<div class="abs" style="-webkit-text-stroke:0.18px #2a2a2a;right:390.89px;top:615.10px;font-size:13.5px;line-height:20px;letter-spacing:0.01px;font-weight:normal;color:#2a2a2a;white-space:nowrap">$418,250,553.87</div>
<div class="abs" style="left:1685.2px;top:615.70px;font-size:12.6px;line-height:18px;letter-spacing:-0.35px;font-weight:normal;color:#2a2a2a;white-space:nowrap;-webkit-text-stroke:0.18px #2a2a2a;">USD</div>
<div class="abs" style="left:1728.3px;top:622.70px;width:0;height:0;border-left:5.300px solid transparent;border-right:5.300px solid transparent;border-top:5.300px solid #787878"></div>
<div class="abs" style="left:1767.8px;top:615.10px;font-size:13.5px;line-height:20px;letter-spacing:0.32px;font-weight:normal;color:#2a2a2a;white-space:nowrap;-webkit-text-stroke:0.18px #2a2a2a;">11/28/2023</div>
<svg class="abs" style="left:1930.9px;top:616.10px" width="4.6" height="18" viewBox="0 0 4.6 18"><g fill="#555"><circle cx="2.3" cy="3.1" r="1.75"/><circle cx="2.3" cy="8.6" r="1.75"/><circle cx="2.3" cy="14.100" r="1.75"/></g></svg>
<div class="abs" style="left:317.2px;top:664.30px;width:1651.3px;height:50px;border:1px solid #dbdbdb;border-radius:4px"></div>
<div class="abs" style="left:341.20px;top:672.00px;width:34.6px;height:34.6px;border-radius:50%;background:#efefef"></div><div class="abs" style="left:348.70px;top:679.40px"><svg viewBox="0 0 24 24" width="20" height="20" style="display:block;"><path fill="#2b2b2b" d="M6.5 10h-2v7h2v-7zm6 0h-2v7h2v-7zm8.5 9H2v2h19v-2zm-2.5-9h-2v7h2v-7zm-7-6.74L16.71 6H6.29l5.21-2.74m0-2.26L2 6v2h19V6l-9.5-5z"/></svg></div>
<div class="abs" style="left:383.4px;top:679.10px;font-size:13.5px;line-height:20px;letter-spacing:0.21px;font-weight:normal;color:#2a2a2a;white-space:nowrap;-webkit-text-stroke:0.18px #2a2a2a;">Standard Chartered Bank</div>
<div class="abs" style="left:551.40px;top:674.10px;width:30.7px;height:30.4px;border-radius:15.2px;background:#e0e0e0;font-size:15.500px;line-height:30.400px;text-align:center;color:#222">2</div>
<div class="abs" style="-webkit-text-stroke:0.18px #2a2a2a;right:390.76px;top:679.10px;font-size:13.5px;line-height:20px;letter-spacing:0.14px;font-weight:normal;color:#2a2a2a;white-space:nowrap">$20,982,308.32</div>
<div class="abs" style="left:1685.2px;top:679.70px;font-size:12.6px;line-height:18px;letter-spacing:-0.35px;font-weight:normal;color:#2a2a2a;white-space:nowrap;-webkit-text-stroke:0.18px #2a2a2a;">USD</div>
<div class="abs" style="left:1728.3px;top:686.70px;width:0;height:0;border-left:5.300px solid transparent;border-right:5.300px solid transparent;border-top:5.300px solid #787878"></div>
<div class="abs" style="left:1767.8px;top:679.10px;font-size:13.5px;line-height:20px;letter-spacing:0.32px;font-weight:normal;color:#2a2a2a;white-space:nowrap;-webkit-text-stroke:0.18px #2a2a2a;">11/28/2023</div>
<svg class="abs" style="left:1930.9px;top:680.10px" width="4.6" height="18" viewBox="0 0 4.6 18"><g fill="#555"><circle cx="2.3" cy="3.1" r="1.75"/><circle cx="2.3" cy="8.6" r="1.75"/><circle cx="2.3" cy="14.100" r="1.75"/></g></svg>
<div class="abs" style="left:317.2px;top:728.30px;width:1651.3px;height:50px;border:1px solid #dbdbdb;border-radius:4px"></div>
<div class="abs" style="left:341.20px;top:736.00px;width:34.6px;height:34.6px;border-radius:50%;background:#e21a37"></div><svg class="abs" style="left:341.20px;top:736.00px" width="34.6" height="34.6" viewBox="130 232 735 736"><g fill="none" stroke="#fff" stroke-linecap="butt"><path d="M478 732 Q610 620 765 565" stroke-width="50"/><path d="M385 665 Q520 565 675 512" stroke-width="48"/><path d="M300 603 Q370 560 445 535" stroke-width="42"/><path d="M228 575 Q290 535 355 515" stroke-width="40"/><path d="M410 478 Q500 455 585 480" stroke-width="16" stroke="#f7c3cb"/><path d="M440 470 L500 515 M520 455 L575 495" stroke-width="14" stroke="#f9d0d6"/></g></svg>
<div class="abs" style="left:383.4px;top:743.10px;font-size:13.5px;line-height:20px;letter-spacing:0.03px;font-weight:normal;color:#2a2a2a;white-space:nowrap;-webkit-text-stroke:0.18px #2a2a2a;">Bank of America CashPro Online</div>
<div class="abs" style="left:591.80px;top:738.10px;width:30.7px;height:30.4px;border-radius:15.2px;background:#e0e0e0;font-size:15.500px;line-height:30.400px;text-align:center;color:#222">1</div>
<div class="abs" style="-webkit-text-stroke:0.18px #2a2a2a;right:391.08px;top:743.10px;font-size:13.5px;line-height:20px;letter-spacing:-0.18px;font-weight:normal;color:#2a2a2a;white-space:nowrap">$19,520,270.11</div>
<div class="abs" style="left:1685.2px;top:743.70px;font-size:12.6px;line-height:18px;letter-spacing:-0.35px;font-weight:normal;color:#2a2a2a;white-space:nowrap;-webkit-text-stroke:0.18px #2a2a2a;">USD</div>
<div class="abs" style="left:1728.3px;top:750.70px;width:0;height:0;border-left:5.300px solid transparent;border-right:5.300px solid transparent;border-top:5.300px solid #787878"></div>
<div class="abs" style="left:1767.8px;top:743.10px;font-size:13.5px;line-height:20px;letter-spacing:0.32px;font-weight:normal;color:#2a2a2a;white-space:nowrap;-webkit-text-stroke:0.18px #2a2a2a;">11/28/2023</div>
<svg class="abs" style="left:1930.9px;top:744.10px" width="4.6" height="18" viewBox="0 0 4.6 18"><g fill="#555"><circle cx="2.3" cy="3.1" r="1.75"/><circle cx="2.3" cy="8.6" r="1.75"/><circle cx="2.3" cy="14.100" r="1.75"/></g></svg>
<div class="abs" style="left:317.2px;top:792.30px;width:1651.3px;height:50px;border:1px solid #dbdbdb;border-radius:4px"></div>
<div class="abs" style="left:341.20px;top:800.00px;width:34.6px;height:34.6px;border-radius:50%;background:#b01e2f;color:#f7b53a;font-family:'Liberation Serif',serif;font-weight:bold;font-size:6.600px;line-height:6.600px;text-align:center;padding-top:10.800px;letter-spacing:.45px;padding-left:.45px">WELLS<br>FARGO</div>
<div class="abs" style="left:383.4px;top:807.10px;font-size:13.5px;line-height:20px;letter-spacing:-0.13px;font-weight:normal;color:#2a2a2a;white-space:nowrap;-webkit-text-stroke:0.18px #2a2a2a;">Wells Fargo</div>
<div class="abs" style="left:464.10px;top:802.10px;width:30.7px;height:30.4px;border-radius:15.2px;background:#e0e0e0;font-size:15.500px;line-height:30.400px;text-align:center;color:#222">4</div>
<div class="abs" style="-webkit-text-stroke:0.18px #2a2a2a;right:390.96px;top:807.10px;font-size:13.5px;line-height:20px;letter-spacing:-0.06px;font-weight:normal;color:#2a2a2a;white-space:nowrap">$16,035,820.31</div>
<div class="abs" style="left:1685.2px;top:807.70px;font-size:12.6px;line-height:18px;letter-spacing:-0.35px;font-weight:normal;color:#2a2a2a;white-space:nowrap;-webkit-text-stroke:0.18px #2a2a2a;">USD</div>
<div class="abs" style="left:1728.3px;top:814.70px;width:0;height:0;border-left:5.300px solid transparent;border-right:5.300px solid transparent;border-top:5.300px solid #787878"></div>
<div class="abs" style="left:1767.8px;top:807.10px;font-size:13.5px;line-height:20px;letter-spacing:0.32px;font-weight:normal;color:#2a2a2a;white-space:nowrap;-webkit-text-stroke:0.18px #2a2a2a;">11/28/2023</div>
<svg class="abs" style="left:1930.9px;top:808.10px" width="4.6" height="18" viewBox="0 0 4.6 18"><g fill="#555"><circle cx="2.3" cy="3.1" r="1.75"/><circle cx="2.3" cy="8.6" r="1.75"/><circle cx="2.3" cy="14.100" r="1.75"/></g></svg>
<div class="abs" style="left:317.2px;top:856.30px;width:1651.3px;height:50px;border:1px solid #dbdbdb;border-radius:4px"></div>
<div class="abs" style="left:341.20px;top:864.00px;width:34.6px;height:34.6px;border-radius:50%;background:#1c55ab"></div><svg class="abs" style="left:350.30px;top:873.30px" width="16" height="16" viewBox="0 0 16 16"><rect x="1" y="1" width="14" height="14" fill="none" stroke="#fff" stroke-width="2"/><path d="M4.300 12 L9.300 4 H11.700 L6.700 12z" fill="#fff"/></svg>
<div class="abs" style="left:383.4px;top:871.10px;font-size:13.5px;line-height:20px;letter-spacing:0.16px;font-weight:normal;color:#2a2a2a;white-space:nowrap;-webkit-text-stroke:0.18px #2a2a2a;">Deutsche Bank</div>
<div class="abs" style="left:487.10px;top:866.10px;width:30.7px;height:30.4px;border-radius:15.2px;background:#e0e0e0;font-size:15.500px;line-height:30.400px;text-align:center;color:#222">3</div>
<div class="abs" style="-webkit-text-stroke:0.18px #2a2a2a;right:390.97px;top:871.10px;font-size:13.5px;line-height:20px;letter-spacing:-0.07px;font-weight:normal;color:#2a2a2a;white-space:nowrap">$2,614,516.54</div>
<div class="abs" style="left:1685.2px;top:871.70px;font-size:12.6px;line-height:18px;letter-spacing:-0.35px;font-weight:normal;color:#2a2a2a;white-space:nowrap;-webkit-text-stroke:0.18px #2a2a2a;">USD</div>
<div class="abs" style="left:1728.3px;top:878.70px;width:0;height:0;border-left:5.300px solid transparent;border-right:5.300px solid transparent;border-top:5.300px solid #787878"></div>
<div class="abs" style="left:1767.8px;top:871.10px;font-size:13.5px;line-height:20px;letter-spacing:0.32px;font-weight:normal;color:#2a2a2a;white-space:nowrap;-webkit-text-stroke:0.18px #2a2a2a;">11/28/2023</div>
<svg class="abs" style="left:1930.9px;top:872.10px" width="4.6" height="18" viewBox="0 0 4.6 18"><g fill="#555"><circle cx="2.3" cy="3.1" r="1.75"/><circle cx="2.3" cy="8.6" r="1.75"/><circle cx="2.3" cy="14.100" r="1.75"/></g></svg>
<div class="abs" style="left:317.2px;top:920.30px;width:1651.3px;height:50px;border:1px solid #dbdbdb;border-radius:4px"></div>
<div class="abs" style="left:341.20px;top:928.00px;width:34.6px;height:34.6px;border-radius:50%;background:#fff;border:1px solid #f4f4f4"></div><svg class="abs" style="left:346.90px;top:939.70px" width="22.700" height="11.400" viewBox="0 0 24 12"><path d="M0 6 L6 0 V12z M24 6 L18 0 V12z M6 0 H18 L12 6z M6 12 H18 L12 6z" fill="#db0011"/></svg>
<div class="abs" style="left:383.4px;top:935.10px;font-size:13.5px;line-height:20px;letter-spacing:-0.87px;font-weight:normal;color:#2a2a2a;white-space:nowrap;-webkit-text-stroke:0.18px #2a2a2a;">HSBC</div>
<div class="abs" style="left:428.50px;top:930.10px;width:30.7px;height:30.4px;border-radius:15.2px;background:#e0e0e0;font-size:15.500px;line-height:30.400px;text-align:center;color:#222">2</div>
<div class="abs" style="-webkit-text-stroke:0.18px #2a2a2a;right:390.75px;top:935.10px;font-size:13.5px;line-height:20px;letter-spacing:0.15px;font-weight:normal;color:#2a2a2a;white-space:nowrap">$1,300,444.03</div>
<div class="abs" style="left:1685.2px;top:935.70px;font-size:12.6px;line-height:18px;letter-spacing:-0.35px;font-weight:normal;color:#2a2a2a;white-space:nowrap;-webkit-text-stroke:0.18px #2a2a2a;">USD</div>
<div class="abs" style="left:1728.3px;top:942.70px;width:0;height:0;border-left:5.300px solid transparent;border-right:5.300px solid transparent;border-top:5.300px solid #787878"></div>
<div class="abs" style="left:1767.8px;top:935.10px;font-size:13.5px;line-height:20px;letter-spacing:0.32px;font-weight:normal;color:#2a2a2a;white-space:nowrap;-webkit-text-stroke:0.18px #2a2a2a;">11/28/2023</div>
<svg class="abs" style="left:1930.9px;top:936.10px" width="4.6" height="18" viewBox="0 0 4.6 18"><g fill="#555"><circle cx="2.3" cy="3.1" r="1.75"/><circle cx="2.3" cy="8.6" r="1.75"/><circle cx="2.3" cy="14.100" r="1.75"/></g></svg>
<div class="abs" style="left:317.2px;top:985.30px;width:1651.3px;height:49px;border:1px solid #dbdbdb;border-radius:4px"></div>
<div class="abs" style="left:341.20px;top:993.00px;width:34.6px;height:34.6px;border-radius:50%;background:#efefef"></div><div class="abs" style="left:348.70px;top:1000.40px"><svg viewBox="0 0 24 24" width="20" height="20" style="display:block;"><path fill="#2b2b2b" d="M6.5 10h-2v7h2v-7zm6 0h-2v7h2v-7zm8.5 9H2v2h19v-2zm-2.5-9h-2v7h2v-7zm-7-6.74L16.71 6H6.29l5.21-2.74m0-2.26L2 6v2h19V6l-9.5-5z"/></svg></div>
<div class="abs" style="left:383.4px;top:1000.10px;font-size:13.5px;line-height:20px;letter-spacing:0.27px;font-weight:normal;color:#2a2a2a;white-space:nowrap;-webkit-text-stroke:0.18px #2a2a2a;">Investment Bank</div>
<div class="abs" style="left:497.90px;top:995.10px;width:30.7px;height:30.4px;border-radius:15.2px;background:#e0e0e0;font-size:15.500px;line-height:30.400px;text-align:center;color:#222">2</div>
<div class="abs" style="-webkit-text-stroke:0.18px #2a2a2a;right:390.78px;top:1000.10px;font-size:13.5px;line-height:20px;letter-spacing:0.12px;font-weight:normal;color:#2a2a2a;white-space:nowrap">$1,250,000.00</div>
<div class="abs" style="left:1685.2px;top:1000.70px;font-size:12.6px;line-height:18px;letter-spacing:-0.35px;font-weight:normal;color:#2a2a2a;white-space:nowrap;-webkit-text-stroke:0.18px #2a2a2a;">USD</div>
<div class="abs" style="left:1728.3px;top:1007.70px;width:0;height:0;border-left:5.300px solid transparent;border-right:5.300px solid transparent;border-top:5.300px solid #787878"></div>
<div class="abs" style="left:1767.8px;top:1000.10px;font-size:13.5px;line-height:20px;letter-spacing:0.32px;font-weight:normal;color:#2a2a2a;white-space:nowrap;-webkit-text-stroke:0.18px #2a2a2a;">11/28/2023</div>
<svg class="abs" style="left:1930.9px;top:1001.10px" width="4.6" height="18" viewBox="0 0 4.6 18"><g fill="#555"><circle cx="2.3" cy="3.1" r="1.75"/><circle cx="2.3" cy="8.6" r="1.75"/><circle cx="2.3" cy="14.100" r="1.75"/></g></svg>
<div class="abs" style="left:317.2px;top:1049.30px;width:1651.3px;height:49px;border:1px solid #dbdbdb;border-radius:4px"></div>
<div class="abs" style="left:341.20px;top:1057.00px;width:34.6px;height:34.6px;border-radius:50%;background:#efefef"></div><div class="abs" style="left:348.70px;top:1064.40px"><svg viewBox="0 0 24 24" width="20" height="20" style="display:block;"><path fill="#2b2b2b" d="M6.5 10h-2v7h2v-7zm6 0h-2v7h2v-7zm8.5 9H2v2h19v-2zm-2.5-9h-2v7h2v-7zm-7-6.74L16.71 6H6.29l5.21-2.74m0-2.26L2 6v2h19V6l-9.5-5z"/></svg></div>
<div class="abs" style="left:383.4px;top:1064.10px;font-size:13.5px;line-height:20px;letter-spacing:0.18px;font-weight:normal;color:#2a2a2a;white-space:nowrap;-webkit-text-stroke:0.18px #2a2a2a;">NatWest (National Westminister Bank)</div>
<div class="abs" style="left:629.80px;top:1059.10px;width:30.7px;height:30.4px;border-radius:15.2px;background:#e0e0e0;font-size:15.500px;line-height:30.400px;text-align:center;color:#222">2</div>
<div class="abs" style="-webkit-text-stroke:0.18px #2a2a2a;right:391.01px;top:1064.10px;font-size:13.5px;line-height:20px;letter-spacing:-0.11px;font-weight:normal;color:#2a2a2a;white-space:nowrap">$170,523.55</div>
<div class="abs" style="left:1685.2px;top:1064.70px;font-size:12.6px;line-height:18px;letter-spacing:-0.35px;font-weight:normal;color:#2a2a2a;white-space:nowrap;-webkit-text-stroke:0.18px #2a2a2a;">USD</div>
<div class="abs" style="left:1728.3px;top:1071.70px;width:0;height:0;border-left:5.300px solid transparent;border-right:5.300px solid transparent;border-top:5.300px solid #787878"></div>
<div class="abs" style="left:1767.8px;top:1064.10px;font-size:13.5px;line-height:20px;letter-spacing:0.32px;font-weight:normal;color:#2a2a2a;white-space:nowrap;-webkit-text-stroke:0.18px #2a2a2a;">11/28/2023</div>
<svg class="abs" style="left:1930.9px;top:1065.10px" width="4.6" height="18" viewBox="0 0 4.6 18"><g fill="#555"><circle cx="2.3" cy="3.1" r="1.75"/><circle cx="2.3" cy="8.6" r="1.75"/><circle cx="2.3" cy="14.100" r="1.75"/></g></svg>
<div class="abs" style="left:317.2px;top:1113.30px;width:1651.3px;height:49px;border:1px solid #dbdbdb;border-radius:4px"></div>
<div class="abs" style="left:341.20px;top:1121.00px;width:34.6px;height:34.6px;border-radius:50%;background:#fff;border:1px solid #f4f4f4"></div><svg class="abs" style="left:348.10px;top:1128.30px" width="21.300" height="21.100" viewBox="220 478 366 362"><path fill="#0f9fe0" d="M340 490 Q380 472 420 484 Q440 515 446 540 Q462 566 480 552 Q492 522 522 517 Q562 520 576 560 Q592 620 574 690 Q545 760 478 808 Q440 830 405 842 Q365 830 330 805 Q265 760 232 690 Q212 620 228 565 Q245 525 292 515 Q320 512 340 490z"/><path fill="#fff" d="M328 518 h34 v42 h-34z"/><path fill="none" stroke="#bfe6f7" stroke-width="7" d="M285 740 L330 705 M300 760 L345 715 M455 705 L500 745 M470 695 L520 735"/></svg>
<div class="abs" style="left:383.4px;top:1128.10px;font-size:13.5px;line-height:20px;letter-spacing:0.05px;font-weight:normal;color:#2a2a2a;white-space:nowrap;-webkit-text-stroke:0.18px #2a2a2a;">Barclays</div>
<div class="abs" style="left:445.70px;top:1123.10px;width:30.7px;height:30.4px;border-radius:15.2px;background:#e0e0e0;font-size:15.500px;line-height:30.400px;text-align:center;color:#222">2</div>
<div class="abs" style="-webkit-text-stroke:0.18px #2a2a2a;right:390.88px;top:1128.10px;font-size:13.5px;line-height:20px;letter-spacing:0.02px;font-weight:normal;color:#2a2a2a;white-space:nowrap">$92,421.03</div>
<div class="abs" style="left:1685.2px;top:1128.70px;font-size:12.6px;line-height:18px;letter-spacing:-0.35px;font-weight:normal;color:#2a2a2a;white-space:nowrap;-webkit-text-stroke:0.18px #2a2a2a;">USD</div>
<div class="abs" style="left:1728.3px;top:1135.70px;width:0;height:0;border-left:5.300px solid transparent;border-right:5.300px solid transparent;border-top:5.300px solid #787878"></div>
<div class="abs" style="left:1767.8px;top:1128.10px;font-size:13.5px;line-height:20px;letter-spacing:0.32px;font-weight:normal;color:#2a2a2a;white-space:nowrap;-webkit-text-stroke:0.18px #2a2a2a;">11/28/2023</div>
<svg class="abs" style="left:1930.9px;top:1129.10px" width="4.6" height="18" viewBox="0 0 4.6 18"><g fill="#555"><circle cx="2.3" cy="3.1" r="1.75"/><circle cx="2.3" cy="8.6" r="1.75"/><circle cx="2.3" cy="14.100" r="1.75"/></g></svg>
</body>
</html>
